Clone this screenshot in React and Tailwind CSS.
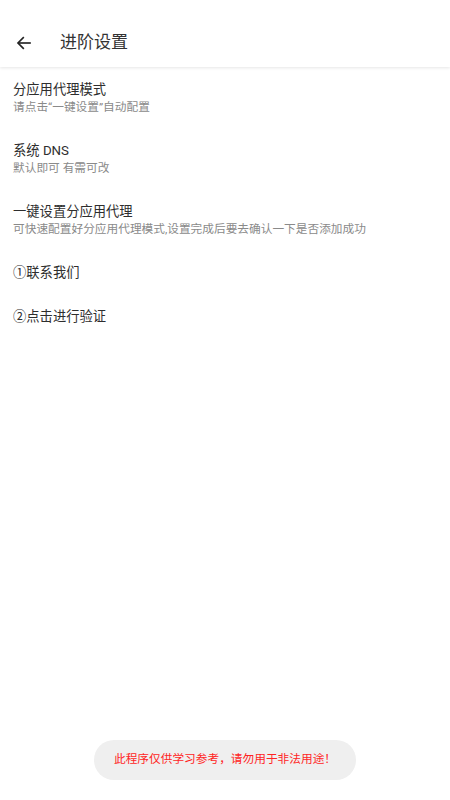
import React from "react";

const items = [
    { title: "分应用代理模式", sub: "请点击“一键设置”自动配置" },
    { title: "系统 DNS", sub: "默认即可 有需可改" },
    { title: "一键设置分应用代理", sub: "可快速配置好分应用代理模式,设置完成后要去确认一下是否添加成功" },
    { title: "①联系我们" },
    { title: "②点击进行验证" },
];

export default function App() {
    return (
        <div
            className="relative w-full h-[800px] bg-white overflow-hidden"
            style={{ fontFamily: '"Roboto", "Noto Sans CJK SC", sans-serif' }}
        >
            {/* header */}
            <div className="h-[67px] pt-[19px] flex items-center bg-white shadow-[0_1px_3px_rgba(0,0,0,0.1)]">
                <div className="w-[46px] flex justify-center pl-[1px]">
                    <svg width="18" height="18" viewBox="0 0 24 24" fill="none" stroke="#222" strokeWidth="2.2" strokeLinecap="square">
                        <path d="M20 12H5" />
                        <path d="M11 5l-7 7 7 7" strokeLinejoin="miter" />
                    </svg>
                </div>
                <div className="ml-[14px] text-[17px] text-[#333]">进阶设置</div>
            </div>

            {/* list */}
            <div className="flex flex-col">
                {items.map((it, i) => (
                    <div key={i} className="px-[13px] pt-[13px] pb-[12px]">
                        <div className="text-[13.3px] leading-[19px] text-[#2e2e2e]">{it.title}</div>
                        {it.sub && (
                            <div className="text-[11.7px] leading-[17px] text-[#8a8a8a]">{it.sub}</div>
                        )}
                    </div>
                ))}
            </div>

            {/* toast */}
            <div className="absolute left-0 right-0 top-[740px] flex justify-center">
                <div className="w-[262px] h-[40px] rounded-full bg-[#efefef] flex items-center justify-center text-[11.7px] text-[#ff2424]">
                    此程序仅供学习参考，请勿用于非法用途！
                </div>
            </div>
        </div>
    );
}
